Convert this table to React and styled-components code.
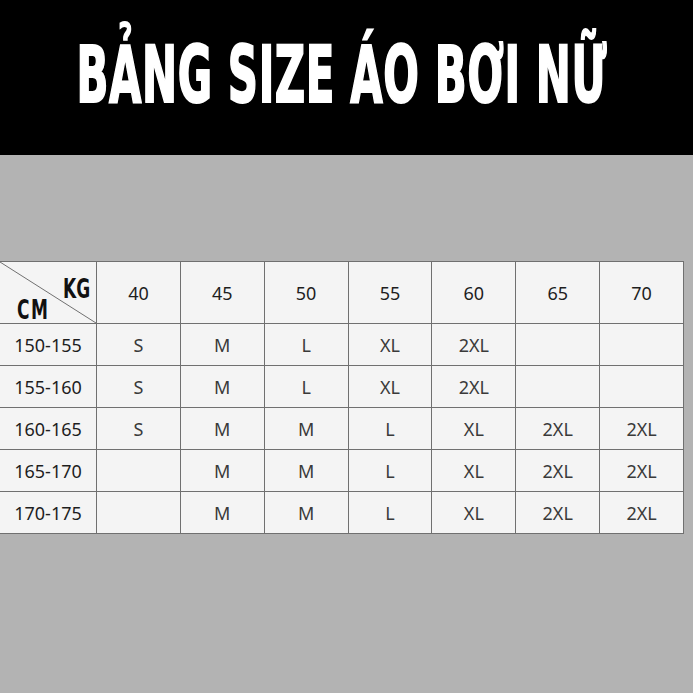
import styled, { createGlobalStyle } from 'styled-components';

const GlobalStyle = createGlobalStyle`
  html, body {
    margin: 0;
    padding: 0;
    background: #b3b3b3;
  }
  body {
    font-family: "Noto Sans", "Liberation Sans", sans-serif;
  }
`;

const Page = styled.div`
  width: 693px;
  height: 693px;
  background: #b3b3b3;
  overflow: hidden;
`;

const Header = styled.header`
  height: 155px;
  background: #000;
  display: flex;
  align-items: center;
  justify-content: center;
`;

const Title = styled.h1`
  margin: -5px 0 0 -10px;
  color: #fff;
  font-family: "DejaVu Sans Condensed", "Liberation Sans", sans-serif;
  font-weight: 700;
  font-size: 79px;
  line-height: 1;
  letter-spacing: 1px;
  white-space: nowrap;
  -webkit-text-stroke: 2px #fff;
  transform: scaleX(0.59);
`;

const Body = styled.main`
  padding-top: 106px;
`;

const Grid = styled.div`
  width: 684px;
  display: grid;
  grid-template-columns: 97px repeat(7, 1fr);
  grid-template-rows: 62px repeat(5, 42px);
  border-top: 1px solid #707070;
  background: #f4f4f4;
`;

const Cell = styled.div`
  display: flex;
  align-items: center;
  justify-content: center;
  border-right: 1px solid #707070;
  border-bottom: 1px solid #707070;
  font-size: 18px;
  color: ${({ $head }) => ($head ? '#1e1e1e' : '#3a3a3a')};
`;

const Corner = styled(Cell)`
  position: relative;
  overflow: hidden;
`;

const Diagonal = styled.svg`
  position: absolute;
  inset: 0;
  width: 100%;
  height: 100%;
`;

const AxisLabel = styled.span`
  position: absolute;
  font-family: "DejaVu Sans Condensed", "Liberation Sans", sans-serif;
  font-weight: 700;
  font-size: 27px;
  line-height: 1;
  color: #111;
  transform: scaleX(0.7);
  transform-origin: left top;
  ${({ $pos }) => ($pos === 'kg' ? 'top: 13px; left: 63px;' : 'top: 34px; left: 17px; letter-spacing: 2px;')}
`;

const weights = ['40', '45', '50', '55', '60', '65', '70'];

const rows = [
  ['150-155', 'S', 'M', 'L', 'XL', '2XL', '', ''],
  ['155-160', 'S', 'M', 'L', 'XL', '2XL', '', ''],
  ['160-165', 'S', 'M', 'M', 'L', 'XL', '2XL', '2XL'],
  ['165-170', '', 'M', 'M', 'L', 'XL', '2XL', '2XL'],
  ['170-175', '', 'M', 'M', 'L', 'XL', '2XL', '2XL'],
];

export default function App() {
  return (
    <Page>
      <GlobalStyle />
      <Header>
        <Title>BẢNG SIZE ÁO BƠI NỮ</Title>
      </Header>
      <Body>
        <Grid>
          <Corner>
            <Diagonal viewBox="0 0 96 61" preserveAspectRatio="none">
              <line x1="0" y1="0" x2="96" y2="61" stroke="#707070" strokeWidth="1" />
            </Diagonal>
            <AxisLabel $pos="kg">KG</AxisLabel>
            <AxisLabel $pos="cm">CM</AxisLabel>
          </Corner>
          {weights.map((w) => (
            <Cell key={w} $head>{w}</Cell>
          ))}
          {rows.map((r) =>
            r.map((v, i) => (
              <Cell key={r[0] + i} $head={i === 0}>{v}</Cell>
            ))
          )}
        </Grid>
      </Body>
    </Page>
  );
}
